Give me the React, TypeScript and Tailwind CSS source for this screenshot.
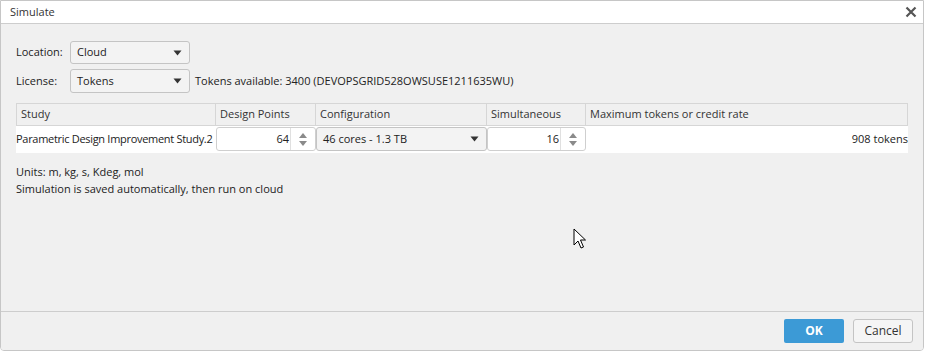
import React from "react";

const font = { fontFamily: '"Open Sans", "Noto Sans", sans-serif' };

function Caret() {
  return (
    <svg width="9" height="6" viewBox="0 0 9 6" className="shrink-0">
      <path d="M0.5 0.5 H8.5 L4.5 5.5 Z" fill="#333" />
    </svg>
  );
}

function Select({ value, className = "" }: { value: string; className?: string }) {
  return (
    <div
      className={`flex items-center justify-between rounded-[3px] border border-[#c4c4c4] bg-[#f3f3f3] pl-[6px] pr-[7px] ${className}`}
    >
      <span>{value}</span>
      <Caret />
    </div>
  );
}

function Spinner() {
  return (
    <div className="flex w-[24px] shrink-0 flex-col items-center justify-center gap-[3px]">
      <svg width="8" height="5" viewBox="0 0 8 5">
        <path d="M0 5 L4 0 L8 5 Z" fill="#8a8a8a" />
      </svg>
      <svg width="8" height="5" viewBox="0 0 8 5">
        <path d="M0 0 L8 0 L4 5 Z" fill="#8a8a8a" />
      </svg>
    </div>
  );
}

function NumberField({ value }: { value: string }) {
  return (
    <div className="flex h-[24px] w-full rounded-[3px] border border-[#cfcfcf] bg-white">
      <div className="flex flex-1 items-center justify-end border-r border-[#e0e0e0] pr-[1px]">{value}</div>
      <Spinner />
    </div>
  );
}

function Cursor() {
  return (
    <svg width="14" height="22" viewBox="0 0 14 22" className="absolute left-[573px] top-[228px]">
      <path
        d="M1 1 L1 17 L5 13 L8 20 L10.5 19 L7.5 12 L12.5 12 Z"
        fill="white"
        stroke="black"
        strokeWidth="1"
        strokeLinejoin="miter"
      />
    </svg>
  );
}

export default function App() {
  return (
    <div className="relative h-[352px] w-[925px] bg-white text-[11px] text-[#222]" style={font}>
      <div className="flex h-[351px] w-[924px] flex-col overflow-hidden rounded-b-[4px] border border-[#c6c6c6]">
        {/* title bar */}
        <div className="flex h-[23px] shrink-0 items-center justify-between border-b border-[#cdcdcd] bg-white pl-[9px] pr-[4px]">
          <span className="text-[#333]">Simulate</span>
          <svg width="12" height="12" viewBox="0 0 12 12" className="mr-[2px]">
            <path d="M1.5 1.5 L10.5 10.5 M10.5 1.5 L1.5 10.5" stroke="#555" strokeWidth="2.2" />
          </svg>
        </div>

        {/* body */}
        <div className="flex flex-1 flex-col bg-[#f0f0f0] pl-[15px] pr-[15px] pt-[17px]">
          <div className="flex h-[23px] items-center">
            <span className="w-[54px]">Location:</span>
            <Select value="Cloud" className="h-[23px] w-[120px]" />
          </div>
          <div className="mt-[5px] flex h-[24px] items-center">
            <span className="w-[54px]">License:</span>
            <Select value="Tokens" className="h-[24px] w-[120px]" />
            <span className="ml-[5px]">Tokens available: 3400 (DEVOPSGRID528OWSUSE1211635WU)</span>
          </div>

          {/* table */}
          <div className="mt-[10px] w-[892px]">
            <div className="grid h-[23px] grid-cols-[199px_100px_171px_99px_1fr] border border-[#d6d6d6] bg-[#f0f0f0] text-[#333]">
              <div className="flex items-center border-r border-[#d6d6d6] pl-[4px]">Study</div>
              <div className="flex items-center border-r border-[#d6d6d6] pl-[4px]">Design Points</div>
              <div className="flex items-center border-r border-[#d6d6d6] pl-[4px]">Configuration</div>
              <div className="flex items-center border-r border-[#d6d6d6] pl-[4px]">Simultaneous</div>
              <div className="flex items-center pl-[4px]">Maximum tokens or credit rate</div>
            </div>
            <div className="grid h-[27px] grid-cols-[200px_100px_171px_99px_1fr] items-start bg-white pt-[1px]">
              <div className="flex h-[24px] items-center whitespace-nowrap tracking-[-0.3px]">
                Parametric Design Improvement Study.2
              </div>
              <NumberField value="64" />
              <Select value="46 cores - 1.3 TB" className="h-[24px] w-full" />
              <NumberField value="16" />
              <div className="flex h-[24px] items-center justify-end">908 tokens</div>
            </div>
          </div>

          <div className="mt-[10px] leading-[17px]">
            <div>Units: m, kg, s, Kdeg, mol</div>
            <div>Simulation is saved automatically, then run on cloud</div>
          </div>
        </div>

        {/* footer */}
        <div className="flex h-[39px] shrink-0 items-center justify-end gap-[9px] border-t border-[#cdcdcd] bg-[#f0f0f0] pr-[10px]">
          <button className="h-[24px] w-[60px] rounded-[2px] bg-[#3c9ad6] text-[12px] font-bold text-white">OK</button>
          <button className="h-[24px] w-[60px] rounded-[3px] border border-[#c4c4c4] bg-[#f5f5f5] text-[12px] text-[#333]">Cancel</button>
        </div>
      </div>
      <Cursor />
    </div>
  );
}
